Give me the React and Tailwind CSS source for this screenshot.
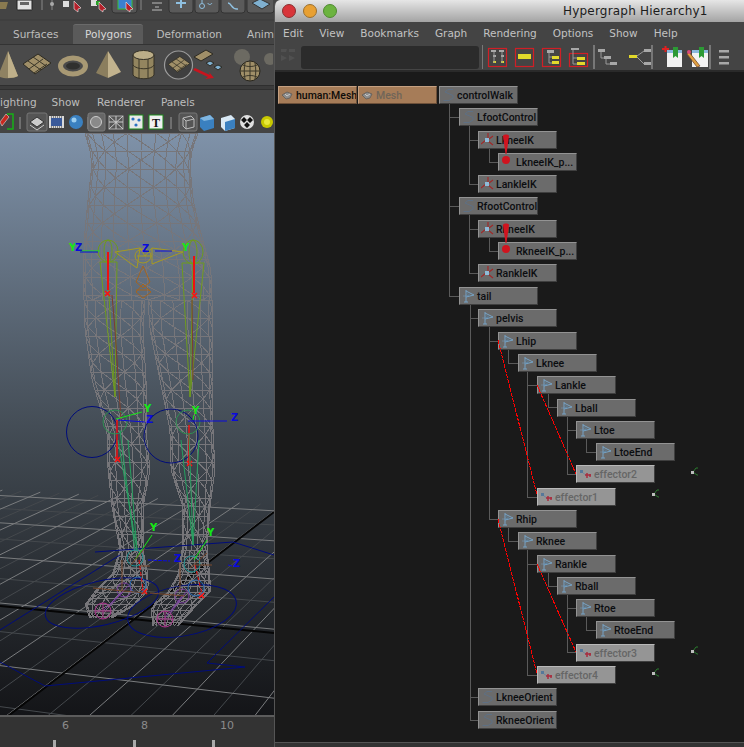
import React from 'react';

const uiFont = { fontFamily: '"DejaVu Sans", sans-serif' };
const nodeFont = { fontFamily: 'Roboto, sans-serif' };

// hypergraph nodes: [label, x, y, kind]
const NODES = [
  ['human:Mesh', 278, 86, 'mesh'],
  ['Mesh', 358, 86, 'meshDim'],
  ['controlWalk', 439, 86, 'xform'],
  ['LfootControl', 459, 108, 'xform'],
  ['LkneeIK', 478, 131, 'ik'],
  ['LkneeIK_p...', 498, 153, 'pole'],
  ['LankleIK', 478, 175, 'ik'],
  ['RfootControl', 459, 197, 'xform'],
  ['RkneeIK', 478, 220, 'ik'],
  ['RkneeIK_p...', 498, 242, 'pole'],
  ['RankleIK', 478, 264, 'ik'],
  ['tail', 459, 287, 'joint'],
  ['pelvis', 478, 309, 'joint'],
  ['Lhip', 498, 332, 'joint'],
  ['Lknee', 518, 354, 'joint'],
  ['Lankle', 537, 376, 'joint'],
  ['Lball', 557, 399, 'joint'],
  ['Ltoe', 576, 421, 'joint'],
  ['LtoeEnd', 596, 443, 'joint'],
  ['effector2', 576, 465, 'effector'],
  ['effector1', 537, 488, 'effector'],
  ['Rhip', 498, 510, 'joint'],
  ['Rknee', 518, 532, 'joint'],
  ['Rankle', 537, 555, 'joint'],
  ['Rball', 557, 577, 'joint'],
  ['Rtoe', 576, 599, 'joint'],
  ['RtoeEnd', 596, 621, 'joint'],
  ['effector3', 576, 644, 'effector'],
  ['effector4', 537, 666, 'effector'],
  ['LkneeOrient', 478, 688, 'xform'],
  ['RkneeOrient', 478, 711, 'xform'],
];

const EDGES = [
  'M449 103V296H459', 'M449 117H459', 'M449 206H459',
  'M469 125V184H478', 'M469 140H478', 'M489 148V162H498',
  'M469 215V273H478', 'M469 229H478', 'M489 237V251H498',
  'M470 304V720H478', 'M470 318H478', 'M470 697H478',
  'M489 326V519H498', 'M489 341H498',
  'M508 349V363H518', 'M527 371V497H537', 'M527 385H537', 'M548 393V407H557', 'M567 416V474H576', 'M567 430H576', 'M586 438V452H596',
  'M508 527V541H518', 'M527 549V675H537', 'M527 564H537', 'M548 572V586H557', 'M567 594V652H576', 'M567 608H576', 'M586 616V630H596',
];

function NodeIcon({ kind }) {
  if (kind === 'mesh' || kind === 'meshDim') {
    return (
      <svg width="13" height="12" viewBox="0 0 13 12" className="shrink-0">
        <path d="M1 6 6 3l5 2-2 4-4 1z" fill="#8d8d8d" stroke="#4d4d4d" strokeWidth=".6" />
        <path d="M4 5l2 2 3-2" fill="none" stroke="#d8d8d8" strokeWidth=".8" />
      </svg>
    );
  }
  if (kind === 'xform') {
    return (
      <svg width="13" height="14" viewBox="0 0 13 14" className="shrink-0">
        <path d="M11 1.5H6L3 4l8 3.5V10L7 12.5H1.5" fill="none" stroke="#5e7084" strokeWidth="1" />
      </svg>
    );
  }
  if (kind === 'joint') {
    return (
      <svg width="13" height="14" viewBox="0 0 13 14" className="shrink-0">
        <path d="M4 1v12M2 13h4M4 2l8 4-8 2" fill="none" stroke="#76a3c6" strokeWidth="1" />
        <path d="M4 4l4 2-4 1" fill="none" stroke="#5b7f9c" strokeWidth=".8" />
        <path d="M1.5 7h5" stroke="#76a3c6" strokeWidth="1" strokeDasharray="1 1" />
      </svg>
    );
  }
  if (kind === 'ik') {
    return (
      <svg width="13" height="14" viewBox="0 0 13 14" className="shrink-0">
        <path d="M7 0v6M0 11l5-4M12 12 7 8M12 3 8 6" stroke="#a02a2a" strokeWidth="1.2" fill="none" />
        <rect x="4" y="5" width="4" height="4" fill="#8fbbd8" />
      </svg>
    );
  }
  if (kind === 'effector') {
    return (
      <svg width="13" height="12" viewBox="0 0 13 12" className="shrink-0">
        <path d="M1 2h3v3H1z" fill="#55789a" />
        <path d="M4 5l3 2" stroke="#6d86a0" />
        <path d="M6 7h6M8 5v5M11 6v3" stroke="#a82c3e" strokeWidth="1.5" />
      </svg>
    );
  }
  return <span className="w-[13px] shrink-0" />;
}

function GraphNode({ label, x, y, kind }) {
  const tone =
    kind === 'mesh'
      ? 'bg-[#a67c58] border-[#c5a081] text-[#0d0b09]'
      : kind === 'meshDim'
        ? 'bg-[#a67c58] border-[#c5a081] text-[#6f6558]'
        : kind === 'effector'
          ? 'bg-[#959595] border-[#b9b9b9] text-[#666]'
          : 'bg-[#6b6b6b] border-[#939393] text-[#0b0d10]';
  const bottom = kind === 'mesh' || kind === 'meshDim' ? 'border-b-[#6d5039] border-r-[#6d5039]' : 'border-b-[#3f3f3f] border-r-[#3f3f3f]';
  return (
    <div
      style={{ left: x, top: y, ...nodeFont }}
      className={`absolute w-[79px] h-[18px] border flex items-center pl-[2px] gap-[2px] text-[10.5px] font-medium whitespace-nowrap overflow-hidden ${tone} ${bottom}`}
    >
      <NodeIcon kind={kind} />
      <span className="pt-px">{label}</span>
    </div>
  );
}

function Warning({ x, y }) {
  return (
    <svg style={{ left: x, top: y }} width="12" height="32" viewBox="0 0 12 32" className="absolute">
      <path d="M3 2c0-2 6-2 6 0L6.5 20h-1z" fill="#d0141f" />
      <circle cx="6" cy="26" r="4" fill="#d0141f" />
    </svg>
  );
}

function Locator({ x, y }) {
  return (
    <svg style={{ left: x, top: y }} width="10" height="10" viewBox="0 0 10 10" className="absolute">
      <path d="M4 5l3-4M4 5l4 3M7 1h2M8 8h1" stroke="#2a7a2e" fill="none" />
      <rect x="2" y="4" width="3" height="3" fill="#bdbdbd" />
    </svg>
  );
}

// wireframe mesh from [y, left, right] outline rows
function meshPath(table, rowStep, cols) {
  const at = (y) => {
    for (let i = 0; i < table.length - 1; i++) {
      const a = table[i];
      const b = table[i + 1];
      if (y >= a[0] && y <= b[0]) {
        const t = (y - a[0]) / (b[0] - a[0]);
        return [a[1] + (b[1] - a[1]) * t, a[2] + (b[2] - a[2]) * t];
      }
    }
    return [table[table.length - 1][1], table[table.length - 1][2]];
  };
  const start = table[0][0];
  const end = table[table.length - 1][0];
  const pt = (y, c) => {
    const [l, r] = at(y);
    const th = (c / cols) * Math.PI;
    return [((l + r) / 2 + ((r - l) / 2) * Math.cos(th)).toFixed(1), y.toFixed(1)];
  };
  let d = '';
  for (let y = start; y < end; y += rowStep) {
    const next = Math.min(y + rowStep, end);
    const [l, r] = at(y);
    const row = Math.round((y - start) / rowStep);
    if (row % 2 === 0 || rowStep < 8) d += `M${l.toFixed(1)} ${y}H${r.toFixed(1)}`;
    for (let c = 0; c <= cols; c++) {
      const p = pt(y, c);
      const q = pt(next, c);
      d += `M${p[0]} ${p[1]}L${q[0]} ${q[1]}`;
      if (c < cols && (c * 3 + row * 5) % 4 !== 3) {
        const flip = (c + row) % 2 === 0;
        const a = pt(y, flip ? c + 1 : c);
        const b = pt(next, flip ? c : c + 1);
        d += `M${a[0]} ${a[1]}L${b[0]} ${b[1]}`;
      }
    }
  }
  return d;
}

const BODY = [[133, 85, 198], [150, 90, 192], [165, 92, 190], [200, 88, 193], [230, 85, 200], [270, 83, 211], [300, 84, 212]];
const LEG_L = [[300, 84, 145], [330, 85, 143], [380, 92, 146], [430, 107, 146], [470, 108, 150], [507, 112, 143], [550, 120, 143]];
const LEG_R = [[300, 148, 212], [330, 150, 212], [380, 160, 212], [430, 170, 213], [470, 171, 215], [507, 183, 210], [550, 182, 207]];
const FOOT_L = [[550, 120, 143], [575, 112, 148], [590, 96, 148], [605, 85, 135], [618, 90, 112]];
const FOOT_R = [[550, 182, 207], [575, 178, 210], [592, 168, 210], [607, 151, 195], [626, 153, 178]];

// floor grid, two vanishing points
function floorGrid() {
  const va = [-2700, 345];
  const vb = [615, 250];
  const yA = (y0, x) => y0 + ((y0 - va[1]) / -va[0]) * x;
  const major = [];
  const minor = [];
  for (let k = 0; k < 10; k++) {
    const y0 = 268 + 1 / (0.00228 + k * 0.000235);
    const d = `M0 ${y0.toFixed(1)}L274 ${yA(y0, 274).toFixed(1)}`;
    if (k % 2 === 1) major.push(d);
    else minor.push(d);
  }
  const farY = 490;
  for (let k = -16; k < 12; k++) {
    const x0 = 27 + k * 40;
    const slope = (700 - vb[1]) / (x0 - vb[0]);
    const farSlope = (farY - va[1]) / -va[0];
    const x1 = (farY - 700 + slope * x0) / (slope - farSlope);
    const y1 = farY + farSlope * x1;
    const x2 = x0 + (716 - 700) / slope;
    const d = `M${x1.toFixed(1)} ${y1.toFixed(1)}L${x2.toFixed(1)} 716`;
    if (k % 2 === 0) major.push(d);
    else minor.push(d);
  }
  return { major: major.join(''), minor: minor.join('') };
}

function Letter({ x, y, fill, children }) {
  return (
    <text x={x} y={y} fill={fill} fontSize="10" fontWeight="700" fontFamily="DejaVu Sans, sans-serif">
      {children}
    </text>
  );
}

function Viewport() {
  const grid = floorGrid();
  const wire = [
    meshPath(BODY, 9, 12),
    meshPath(LEG_L, 9, 7),
    meshPath(LEG_R, 9, 7),
    meshPath(FOOT_L, 6, 8),
    meshPath(FOOT_R, 6, 8),
  ].join('');
  return (
    <div className="relative flex-1 overflow-hidden bg-linear-to-b from-[#7f92a9] via-[#3f474f] via-55% to-[#141518]">
      <svg width="274" height="582" viewBox="0 133 274 582" className="block">
        <path d={grid.minor} stroke="#45494d" fill="none" />
        <path d={grid.major} stroke="#7a7c7e" fill="none" />
        <path d="M0 606 274 633M8 716 274 512" stroke="#050505" strokeWidth="2" fill="none" />
        <path d={wire} stroke="#77767a" strokeWidth="1" fill="none" shapeRendering="crispEdges" />
        <g fill="none" stroke="#000c7a" strokeWidth="1">
          <circle cx="92" cy="432" r="25.5" />
          <circle cx="171" cy="436" r="27" />
          <ellipse cx="102" cy="603" rx="58" ry="22" transform="rotate(-13 102 603)" />
          <ellipse cx="182" cy="611" rx="55" ry="25" transform="rotate(-10 182 611)" />
          <path d="M95 552 233 542 274 555M120 555 0 630M0 662 45 686 245 667 207 663 274 597" />
        </g>
        {/* rig */}
        <g fill="none" strokeWidth="1">
          <g stroke="#6e9a1e">
            <ellipse cx="108" cy="251" rx="10" ry="11" />
            <ellipse cx="108" cy="251" rx="4" ry="11" />
            <ellipse cx="193" cy="252" rx="10" ry="12" />
            <ellipse cx="193" cy="252" rx="4" ry="12" />
            <path d="M100 262H117L115 397ZM107 262 115 397M182 263H204L190 397ZM193 263 190 397" />
          </g>
          <path d="M115 252 140 248 137 268ZM183 252 152 248 152 264ZM140 248 145 256 152 248M137 256H152" stroke="#a69a22" />
          <ellipse cx="143" cy="256" rx="8" ry="7" stroke="#a69a22" />
          <path d="M143 266 136 282 143 288 150 282ZM136 290H150M143 284 136 292 143 298 151 292Z" stroke="#a4641e" />
          <path d="M112 295 115 330 121 420M192 300 193 380" stroke="#7d3e2c" />
          <path d="M80 251H100" stroke="#15e815" />
          <path d="M80 252H98M155 251H172" stroke="#0a0adc" />
          <path d="M108 252V290M194 256V293" stroke="#ee1010" strokeWidth="2" />
          <path d="M117 420V458M189 425V462" stroke="#ee1010" strokeWidth="1.5" />
          <path d="M105 291 110 296M110 291 105 296M192 293 197 298M197 293 192 298M115 457 120 462M120 457 115 462M187 461 192 466M192 461 187 466M142 589 147 594M147 589 142 594M199 593 204 598M204 593 199 598" stroke="#ff1010" strokeWidth="1.5" />
          <circle cx="115" cy="422" r="12" stroke="#2f8f52" />
          <circle cx="188" cy="422" r="12" stroke="#2f8f52" />
          <path d="M118 440 137 550M128 440 137 550M120 430 135 550M181 440 193 545M199 440 193 545M189 434 193 545" stroke="#26a060" />
          <path d="M116 419 142 412M193 420 194 415" stroke="#15e815" />
          <path d="M118 420 145 422M188 421H227" stroke="#0a0adc" />
          <circle cx="135" cy="558" r="8" stroke="#1f9090" />
          <circle cx="192" cy="564" r="8" stroke="#1f9090" />
          <circle cx="138" cy="585" r="8" stroke="#2a68b0" />
          <circle cx="196" cy="588" r="8" stroke="#2a68b0" />
          <circle cx="124" cy="590" r="7" stroke="#7a3fa0" />
          <circle cx="182" cy="596" r="7" stroke="#7a3fa0" />
          <path d="M124 590 104 610M182 596 165 618M128 586 110 606M186 592 170 614" stroke="#7a3fa0" />
          <circle cx="103" cy="611" r="8" stroke="#a8348a" />
          <circle cx="165" cy="619" r="8" stroke="#a8348a" />
          <path d="M103 603V619M95 611H111M165 611V627M157 619H173" stroke="#a8348a" />
          <path d="M135 560 152 535M194 560 207 540" stroke="#15e815" />
          <path d="M148 560 170 561M228 565 232 566" stroke="#0a0adc" strokeDasharray="4 1" />
          <path d="M93 588 145 593M150 593 185 596M122 560V590M180 560V592M145 548 130 566M207 553 190 568M195 565 212 565M140 566 150 566" stroke="#7a4a2e" />
          <path d="M139 560 143 590M195 565 202 594" stroke="#e01010" strokeDasharray="4 2" />
        </g>
        <Letter x="69" y="251" fill="#15e815">Y</Letter>
        <Letter x="75" y="251" fill="#0a0adc">Z</Letter>
        <Letter x="142" y="252" fill="#0a0adc">Z</Letter>
        <Letter x="182" y="251" fill="#15e815">Y</Letter>
        <Letter x="144" y="412" fill="#15e815">Y</Letter>
        <Letter x="146" y="423" fill="#0a0adc">Z</Letter>
        <Letter x="192" y="414" fill="#15e815">Y</Letter>
        <Letter x="231" y="421" fill="#0a0adc">Z</Letter>
        <Letter x="150" y="531" fill="#15e815">Y</Letter>
        <Letter x="207" y="536" fill="#15e815">Y</Letter>
        <Letter x="174" y="562" fill="#0a0adc">Z</Letter>
        <Letter x="233" y="567" fill="#0a0adc">Z</Letter>
      </svg>
    </div>
  );
}

const TAN = '#a08f68';

function ShelfIcon({ children, className = '' }) {
  return (
    <svg width="35" height="36" viewBox="0 0 35 36" className={`shrink-0 ${className}`}>
      {children}
    </svg>
  );
}

function PlaneGrid({ tf = '' }) {
  return (
    <g transform={tf}>
      <path d="M4 17 19 7 32 16 16 27Z" fill={TAN} stroke="#2c2a22" />
      <path d="M9 14 22 23M14 10 27 19M10 22 24 12M15 26 28 17" stroke="#3a3628" fill="none" />
    </g>
  );
}

function Shelf() {
  return (
    <div className="h-[40px] bg-[#4a4a4a] flex items-center -ml-[10px]">
      <ShelfIcon>
        <path d="M18 4 8 29c4 3 16 3 20 0Z" fill="#8f8262" />
        <path d="M18 4 18 31c4 0 8-1 10-2Z" fill="#bfb08a" />
      </ShelfIcon>
      <ShelfIcon className="-ml-[6px]"><PlaneGrid /></ShelfIcon>
      <ShelfIcon className="ml-px">
        <ellipse cx="18" cy="19" rx="12.5" ry="8" fill="none" stroke="#a89974" strokeWidth="5" />
        <ellipse cx="18" cy="19" rx="7" ry="3.5" fill="#30302e" />
      </ShelfIcon>
      <ShelfIcon className="ml-px">
        <path d="M17 4 5 26l12 5Z" fill="#8b7e5e" />
        <path d="M17 4 17 31l13-6Z" fill="#c2b38e" />
      </ShelfIcon>
      <ShelfIcon>
        <path d="M7 8v20c3 5 19 5 21 0V8Z" fill="#93855f" stroke="#322f25" />
        <ellipse cx="17.5" cy="8" rx="10.5" ry="4.5" fill="#bcae88" stroke="#322f25" />
        <path d="M7 18c3 5 19 5 21 0M13 12v20M22 12v20" stroke="#3a3628" fill="none" />
      </ShelfIcon>
      <ShelfIcon>
        <circle cx="17.5" cy="18" r="14" fill="#3f3f3f" stroke="#9c9c9c" strokeWidth="1.2" />
        <PlaneGrid tf="translate(4 4) scale(.78)" />
      </ShelfIcon>
      <ShelfIcon className="-ml-[4px]">
        <path d="M2 10 14 3 21 7 9 14Z" fill={TAN} stroke="#2c2a22" />
        <path d="M14 16l4-2 4 2-4 3zM22 20l4-2 4 2-4 3z" fill="#7fb0d0" stroke="#2c2a22" />
        <path d="M3 21 18 28l-1-3 5 6-9 1 3-2L1 23Z" fill="#c8141e" />
      </ShelfIcon>
      <ShelfIcon className="ml-px">
        <circle cx="14" cy="10" r="8" fill="#6c6a62" />
        <circle cx="22" cy="24" r="10" fill="#a08f68" stroke="#29261d" />
        <path d="M12 24h20M22 14v20M15 18c4 2 10 2 14 0M15 30c4-2 10-2 14 0M17 16c-1 4-1 12 0 16M27 16c1 4 1 12 0 16" stroke="#3a3628" fill="none" />
      </ShelfIcon>
      <ShelfIcon className="-ml-[25px]">
        <circle cx="32" cy="12" r="6" fill="#6c6a62" />
      </ShelfIcon>
    </div>
  );
}

function TopIcons() {
  return (
    <div className="h-[24px] shrink-0 bg-[#444] overflow-hidden">
      <svg width="274" height="24" viewBox="0 0 274 24" className="block">
        <path d="M0 2 8 2 6 9 0 9Z" fill="#8a7a50" />
        <path d="M17 0V9c0 1 1 1 2 1h12c1 0 1 0 1-1V0Z" fill="#e2e2e2" stroke="#222" />
        <rect x="20" y="2" width="9" height="3" fill="#666" />
        <path d="M42 0V10M52 0V10M141 0V10" stroke="#888" />
        <circle cx="52" cy="4" r="2" fill="#aaa" />
        <rect x="63" y="1" width="6" height="6" fill="#ddd" />
        <path d="M74 1 81 8 78 9 78 12 74 9Z" fill="#b4202a" stroke="#eee" strokeWidth=".6" />
        <rect x="91" y="0" width="6" height="6" fill="#ddd" />
        <rect x="96" y="1" width="4" height="4" fill="#2aa02a" />
        <path d="M99 2 106 9 103 10 103 12 99 9Z" fill="#b4202a" stroke="#eee" strokeWidth=".6" />
        <rect x="112" y="-3" width="25" height="16" rx="3" fill="#555" stroke="#333" />
        <rect x="118" y="-2" width="14" height="11" fill="#3a80d0" stroke="#38c038" />
        <path d="M126 2 133 9 130 10 130 12 126 9Z" fill="#b4202a" stroke="#eee" strokeWidth=".6" />
        <path d="M152 3h10M155 7h4M152 10h10" stroke="#bbb" />
        <rect x="169" y="-3" width="24" height="16" rx="3" fill="#5a5a5a" stroke="#333" />
        <rect x="195" y="-3" width="24" height="16" rx="3" fill="#5a5a5a" stroke="#333" />
        <rect x="221" y="-3" width="24" height="16" rx="3" fill="#5a5a5a" stroke="#333" />
        <rect x="247" y="-3" width="27" height="16" rx="3" fill="#5a5a5a" stroke="#333" />
        <path d="M181-1V8M176 3H186" stroke="#8fc0e0" strokeWidth="2" />
        <circle cx="202" cy="6" r="2.5" fill="none" stroke="#8fc0e0" />
        <path d="M202 3V-2M212 3c-1 2-4 2-4 0" stroke="#8fc0e0" fill="none" />
        <path d="M228 3c4 0 3 7 10 6" stroke="#8fc0e0" fill="none" strokeWidth="1.5" />
        <path d="M252 3 260-1 270 4 262 9Z" fill="#7fb0d0" stroke="#333" />
        <path d="M0 20H274" stroke="#3a3a3a" />
      </svg>
    </div>
  );
}

function ViewIcons() {
  return (
    <div className="h-[21px] bg-[#444] shrink-0">
      <svg width="274" height="21" viewBox="0 112 274 21" className="block">
        <path d="M0 122 6 114 9 117 2 126Z" fill="#c8281e" stroke="#ddd" strokeWidth=".6" />
        <path d="M7 114H13V129H7" fill="none" stroke="#16b016" strokeWidth="1.5" />
        <path d="M20 117V129M88 117V129M171 117V129" stroke="#999" />
        <rect x="27" y="113" width="20" height="18" rx="2" fill="#555" stroke="#777" />
        <path d="M30 122 37 117 44 122 37 127Z" fill="#ccc" stroke="#333" />
        <path d="M30 125 37 130 44 125" fill="none" stroke="#ccc" />
        <rect x="49" y="116" width="15" height="12" fill="#d9d9d9" />
        <rect x="51" y="118" width="11" height="8" fill="#3a5a9a" />
        <path d="M51 117h11M51 127h11" stroke="#333" strokeDasharray="1 1" />
        <circle cx="76" cy="122" r="7" fill="#3a80c0" />
        <circle cx="74" cy="120" r="2.5" fill="#9ccdef" />
        <rect x="88" y="113" width="17" height="18" rx="2" fill="#666" stroke="#7a7a7a" />
        <circle cx="96" cy="122" r="5.5" fill="#8a8a8a" stroke="#ccc" />
        <rect x="109" y="116" width="14" height="13" fill="#555" stroke="#aaa" />
        <path d="M109 116 123 129M123 116 109 129M116 116V129M109 122H123" stroke="#ccc" />
        <rect x="129" y="115" width="14" height="14" fill="#e8e8e8" stroke="#1c8a1c" />
        <circle cx="133" cy="119" r="1.6" fill="#2a70c0" />
        <circle cx="139" cy="120" r="1.6" fill="#2a70c0" />
        <circle cx="136" cy="125" r="1.6" fill="#2a70c0" />
        <rect x="149" y="115" width="14" height="14" fill="#f0f0f0" stroke="#1c8a1c" />
        <text x="152" y="127" fontSize="12" fontWeight="700" fill="#111" fontFamily="Liberation Serif, serif">T</text>
        <rect x="179" y="113" width="18" height="18" rx="2" fill="#555" stroke="#777" />
        <path d="M183 118 191 116 194 119V127L186 129 183 126ZM183 118 186 121V129M186 121 194 119" fill="none" stroke="#bbb" />
        <path d="M200 118 210 115 214 119V128L204 131 200 127Z" fill="#3a80c0" />
        <path d="M200 118 204 121 214 119 210 115Z" fill="#7fb5e0" />
        <path d="M221 118 231 115 235 119V128L225 131 221 127Z" fill="#d8e8f4" />
        <path d="M225 122 235 119V128L225 131Z" fill="#3a80c0" />
        <circle cx="247" cy="122" r="7" fill="#e0e0e0" />
        <path d="M244 117l3 3-3 3-3-3zM250 117l3 3-3 3-3-3zM247 122l3 3-3 3-3-3z" fill="#111" />
        <circle cx="267" cy="122" r="6" fill="#c8c800" />
        <circle cx="267" cy="122" r="3" fill="#e8e83a" />
      </svg>
    </div>
  );
}

function LeftPanel() {
  return (
    <div className="w-[274px] shrink-0 flex flex-col bg-[#444] overflow-hidden text-[#bdbdbd] text-[10.5px]" style={uiFont}>
      <TopIcons />
      <div className="h-[21px] shrink-0 flex items-end border-b border-[#333] bg-[#444]">
        <span className="ml-[13px] h-[19px] flex items-center">Surfaces</span>
        <span className="ml-[15px] w-[70px] h-[20px] flex items-center justify-center bg-[#5a5a5a] rounded-t-[3px] border-t border-[#6a6a6a] text-[#d8d8d8]">Polygons</span>
        <span className="ml-[13px] h-[19px] flex items-center">Deformation</span>
        <span className="ml-[25px] h-[19px] flex items-center">Anim</span>
      </div>
      <Shelf />
      <div className="h-[5px] shrink-0 border-y border-[#2f2f2f] bg-[#3b3b3b]" />
      <div className="h-[18px] shrink-0 mt-[4px] flex items-center">
        <span>ighting</span>
        <span className="ml-[15px]">Show</span>
        <span className="ml-[17px]">Renderer</span>
        <span className="ml-[16px]">Panels</span>
      </div>
      <ViewIcons />
      <Viewport />
      <div className="h-[32px] shrink-0 bg-[#333] border-t-2 border-[#5c5c5c] relative">
        <div className="flex text-[#8b8b8b] text-[11px] pt-[1px]">
          <span className="ml-[62px]">6</span>
          <span className="ml-[72px]">8</span>
          <span className="ml-[72px]">10</span>
        </div>
        <div className="absolute left-[53px] bottom-0 w-[3px] h-[7px] bg-[#aaa]" />
        <div className="absolute left-[133px] bottom-0 w-[3px] h-[7px] bg-[#aaa]" />
        <div className="absolute left-[212px] bottom-0 w-[3px] h-[7px] bg-[#aaa]" />
      </div>
    </div>
  );
}

function GraphToolbar() {
  return (
    <div className="h-[28px] flex items-center bg-[#444] border-b-2 border-[#2a2a2a] shrink-0">
      <svg width="20" height="20" viewBox="0 0 20 20" className="ml-[5px] shrink-0">
        <path d="M1 2h6l-1 3H1zM9 2h6v3H9zM1 8l6 3-6 3zM9 8l6 3-6 3z" fill="#505050" />
      </svg>
      <div className="ml-[1px] w-[178px] h-[23px] rounded-[3px] bg-[#2b2b2b] shrink-0" />
      <svg width="262" height="26" viewBox="0 0 262 26" className="ml-[3px] shrink-0">
        <path d="M0 1V25M112 1V25M170 1V25M228 1V25" stroke="#aaa" />
        <g fill="none" stroke="#d01f26" strokeWidth="1.2">
          <rect x="6.5" y="4.5" width="18" height="18" />
          <rect x="33.5" y="4.5" width="18" height="18" />
          <rect x="60.5" y="4.5" width="18" height="18" />
          <rect x="87.5" y="9.5" width="18" height="13" />
        </g>
        <g fill="#a8a8a8">
          <rect x="9" y="6" width="5" height="2" /><rect x="17" y="6" width="5" height="2" />
          <rect x="11" y="11" width="3" height="2" /><rect x="19" y="11" width="3" height="2" />
          <rect x="65" y="6" width="7" height="3" />
          <rect x="89" y="4" width="8" height="2" />
          <rect x="116" y="5" width="7" height="3" /><rect x="122" y="12" width="7" height="3" /><rect x="128" y="18" width="7" height="3" />
          <rect x="162" y="5" width="7" height="3" /><rect x="162" y="18" width="7" height="3" />
          <rect x="237" y="6" width="10" height="2.5" /><rect x="237" y="12" width="10" height="2.5" /><rect x="237" y="18" width="10" height="2.5" />
        </g>
        <g fill="#e2d92b">
          <rect x="11" y="17" width="3" height="2" /><rect x="19" y="17" width="3" height="2" />
          <rect x="36" y="10" width="13" height="5" />
          <rect x="70" y="12" width="7" height="3" /><rect x="70" y="17" width="7" height="3" />
          <rect x="95" y="13" width="8" height="3" /><rect x="95" y="18" width="8" height="3" />
          <rect x="147" y="11" width="8" height="3" />
        </g>
        <path d="M12 8V19M20 8V19M67 9V19H70M67 13H70M91 6V20H95M91 14H95M119 8V14H122M124 15V20H128M155 12 162 7M155 13 162 20" stroke="#999" fill="none" />
        <rect x="185" y="6" width="15" height="17" fill="#f2f2f2" />
        <rect x="185" y="6" width="15" height="3" fill="#8bb8dc" />
        <path d="M191 3h5v11l-2.5-2-2.5 2z" fill="#2c9a35" />
        <path d="M180 5h7M183.5 2v6" stroke="#e02020" strokeWidth="2" />
        <rect x="210" y="6" width="16" height="17" fill="#f2f2f2" />
        <rect x="210" y="6" width="16" height="3" fill="#8bb8dc" />
        <path d="M217 3h5v11l-2.5-2-2.5 2z" fill="#2c9a35" />
        <path d="M207 8 218 22l-3 1-10-13z" fill="#e0a040" stroke="#7a4a2a" strokeWidth=".8" />
        <circle cx="207" cy="8" r="2" fill="#d84a7a" />
      </svg>
    </div>
  );
}

function HypergraphWindow() {
  const menu = ['Edit', 'View', 'Bookmarks', 'Graph', 'Rendering', 'Options', 'Show', 'Help'];
  return (
    <div className="flex-1 flex flex-col border-l border-[#555] bg-[#1a1a1a] rounded-tl-[6px] overflow-hidden" style={uiFont}>
      <div className="h-[22px] shrink-0 flex items-center bg-linear-to-b from-[#e6e6e6] to-[#a4a4a4] pl-[7px]">
        <span className="w-[14px] h-[14px] rounded-full bg-[#d8353a] border border-[#8a3030]" />
        <span className="ml-[7px] w-[14px] h-[14px] rounded-full bg-[#e8a033] border border-[#9a7030]" />
        <span className="ml-[6px] w-[14px] h-[14px] rounded-full bg-[#6cb33f] border border-[#4f8a30]" />
        <span className="ml-[226px] text-[12px] text-[#1c1c1c] tracking-[0.2px] whitespace-nowrap">Hypergraph Hierarchy1</span>
      </div>
      <div className="h-[22px] shrink-0 flex items-center gap-[16px] pl-[8px] pt-[1px] bg-[#444] text-[#c2c2c2] text-[10.5px]">
        {menu.map((m) => (
          <span key={m}>{m}</span>
        ))}
      </div>
      <GraphToolbar />
      <div className="relative flex-1 overflow-hidden">
        {/* graph is positioned in page coordinates, offset by the canvas origin */}
        <div className="absolute left-[-275px] top-[-72px]">
          <svg width="744" height="747" className="absolute left-0 top-0">
            <g fill="none" stroke="#5a5a5a" strokeWidth="1" shapeRendering="crispEdges">
              {EDGES.map((d) => (
                <path key={d} d={d} />
              ))}
            </g>
          </svg>
          {NODES.map(([label, x, y, kind]) => (
            <GraphNode key={label} label={label} x={x} y={y} kind={kind} />
          ))}
          <svg width="744" height="747" className="absolute left-0 top-0">
            <g fill="none" stroke="#ff0000" strokeDasharray="4 1" shapeRendering="crispEdges">
              <path d="M498 340 537 495M537 385 576 474M498 519 537 674M537 564 576 652" />
            </g>
          </svg>
          <Warning x={500} y={134} />
          <Warning x={500} y={223} />
          <Locator x={689} y={467} />
          <Locator x={650} y={489} />
          <Locator x={689} y={646} />
          <Locator x={650} y={668} />
        </div>
      </div>
      <div className="h-[5px] shrink-0 border-t border-[#555] bg-[#333]" />
    </div>
  );
}

export default function App() {
  return (
    <div className="w-[744px] h-[747px] flex overflow-hidden bg-[#444]">
      <LeftPanel />
      <HypergraphWindow />
    </div>
  );
}
